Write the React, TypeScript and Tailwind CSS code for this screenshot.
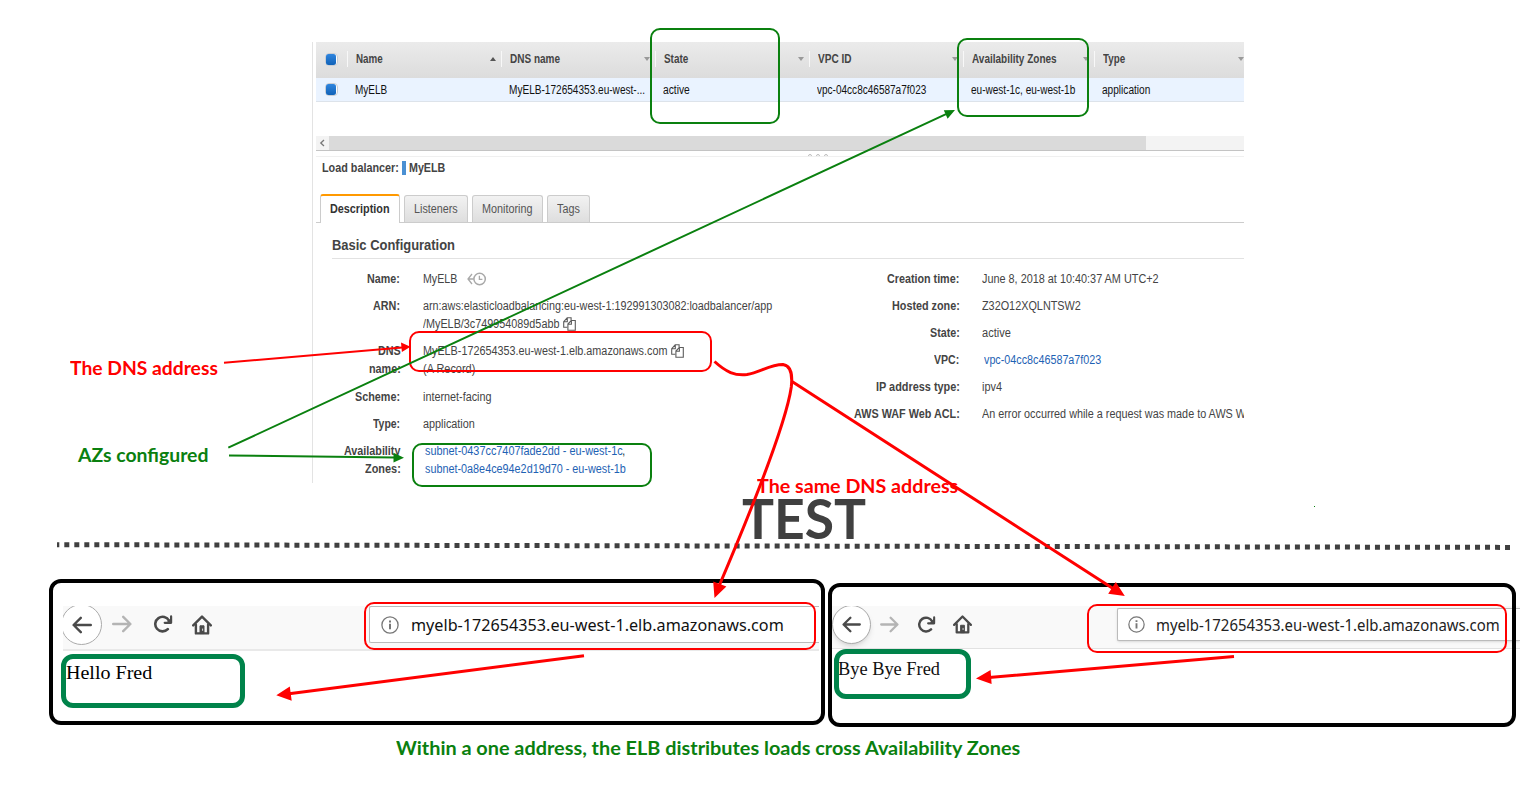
import { useLayoutEffect, useRef } from "react";
import type { ReactNode } from "react";

/* Single line of text condensed or widened to a given advance width. */
function Fit({ w, children, className = "" }: { w: number; children: ReactNode; className?: string }) {
  const ref = useRef<HTMLSpanElement>(null);
  useLayoutEffect(() => {
    const el = ref.current;
    if (el) el.style.transform = `scaleX(${w / el.offsetWidth})`;
  }, [w]);
  return (
    <span className={`inline-flex whitespace-nowrap ${className}`} style={{ width: w }}>
      <span ref={ref} className="inline-block shrink-0 origin-left">
        {children}
      </span>
    </span>
  );
}

function Checkbox() {
  return (
    <span className="h-[13px] w-[13px] rounded-[4px] border border-[#c9cdd3] bg-white px-[0.5px]">
      <span className="block size-full rounded-[2.5px] bg-linear-to-b from-[#2f85de] to-[#0f62b8]" />
    </span>
  );
}

function CopyIcon() {
  return (
    <svg viewBox="0 0 13 14" className="-mt-px h-[14px] w-[13px] shrink-0" fill="none" stroke="#5c5c5c" strokeWidth="1.1">
      <path d="M4.4 10.2H.7V4.6L4.2.8h3.9v2.6M.8 4.7h3.5V1" />
      <path d="M4.9 7 8.3 3.5h4v9.7H4.9zM5 7.2h3.4V3.7" fill="#fff" />
    </svg>
  );
}

function HistoryIcon() {
  return (
    <svg viewBox="0 0 20 14" className="h-[14px] w-5" fill="none" stroke="#a9a9a9" strokeWidth="1.5">
      <circle cx="12.6" cy="7" r="5.7" />
      <path d="M12.4 3.8v3.6h3M6.8 7H1.2M5 2 1 7l4 5" strokeWidth="1.3" />
    </svg>
  );
}

const columns = [
  { title: "Name", tw: 27, value: "MyELB", vw: 32.5, up: true },
  { title: "DNS name", tw: 50, value: "MyELB-172654353.eu-west-...", vw: 136 },
  { title: "State", tw: 24, value: "active", vw: 26.5 },
  { title: "VPC ID", tw: 33.5, value: "vpc-04cc8c46587a7f023", vw: 109.5 },
  { title: "Availability Zones", tw: 85, value: "eu-west-1c, eu-west-1b", vw: 104.5 },
  { title: "Type", tw: 22, value: "application", vw: 48 },
];

const tableGrid = "grid grid-cols-[31px_154px_154px_154px_154px_131px_150px]";

function Table() {
  return (
    <>
      <div className={`${tableGrid} h-9 items-center bg-linear-to-b from-[#ebebeb] to-[#dcdcdc] pb-[2px] font-bold text-[#444]`}>
        <div className="flex pl-[8.5px]">
          <Checkbox />
        </div>
        {columns.map((c, i) => (
          <div
            key={c.title}
            className={`flex h-4 items-center justify-between border-l border-[#f8f8f8] pl-[7.5px] ${i === 5 ? "pr-0" : "pr-[5px]"}`}
          >
            <Fit w={c.tw}>{c.title}</Fit>
            {c.up ? (
              <span className="border-x-[3px] border-b-[4px] border-x-transparent border-b-[#555]" />
            ) : (
              <span className="border-x-[3px] border-t-[4px] border-x-transparent border-t-[#999]" />
            )}
          </div>
        ))}
      </div>
      <div className={`${tableGrid} h-6 items-center border-b border-[#dde3ea] bg-[#eaf3ff] text-[#111]`}>
        <div className="flex pl-[8.5px]">
          <Checkbox />
        </div>
        {columns.map((c) => (
          <div key={c.title} className="flex pl-[7.5px]">
            <Fit w={c.vw}>{c.value}</Fit>
          </div>
        ))}
      </div>
    </>
  );
}

function Tabs() {
  return (
    <div className="flex h-[29px] items-end gap-[4px] border-b border-[#ccc] pl-1 text-[#555]">
      <div className="-mb-px flex h-[29px] w-20 items-center justify-center rounded-t-[3px] border-x border-t-2 border-x-[#ccc] border-t-[#ff9900] bg-white pb-[2px] font-bold text-[#333]">
        <Fit w={59.5}>Description</Fit>
      </div>
      <div className="flex h-[27px] w-16 items-center justify-center rounded-t-[3px] border border-b-0 border-[#ccc] bg-linear-to-b from-[#f2f2f2] to-[#dedede]">
        <Fit w={44}>Listeners</Fit>
      </div>
      <div className="flex h-[27px] w-[71px] items-center justify-center rounded-t-[3px] border border-b-0 border-[#ccc] bg-linear-to-b from-[#f2f2f2] to-[#dedede]">
        <Fit w={50.5}>Monitoring</Fit>
      </div>
      <div className="flex h-[27px] w-[43px] items-center justify-center rounded-t-[3px] border border-b-0 border-[#ccc] bg-linear-to-b from-[#f2f2f2] to-[#dedede]">
        <Fit w={22.5}>Tags</Fit>
      </div>
    </div>
  );
}

type Line = [string, number];

function Row({ label, children }: { label: Line[]; children: ReactNode }) {
  return (
    <div className="flex gap-[23px]">
      <div className="flex w-[120px] shrink-0 flex-col items-end font-bold text-[#444]">
        {label.map(([t, w]) => (
          <Fit key={t} w={w}>
            {t}
          </Fit>
        ))}
      </div>
      <div className="flex flex-col">{children}</div>
    </div>
  );
}

function Details() {
  return (
    <div className="flex pt-[11px] leading-[18px] text-[#444]">
      <div className="-ml-[52px] flex w-[560px] shrink-0 flex-col gap-[9.2px]">
        <Row label={[["Name:", 33]]}>
          <div className="flex items-center gap-[9px]">
            <Fit w={34.5}>MyELB</Fit>
            <HistoryIcon />
          </div>
        </Row>
        <Row label={[["ARN:", 27]]}>
          <Fit w={349}>arn:aws:elasticloadbalancing:eu-west-1:192991303082:loadbalancer/app</Fit>
          <div className="flex items-center gap-[4px]">
            <Fit w={136}>/MyELB/3c749954089d5abb</Fit>
            <CopyIcon />
          </div>
        </Row>
        <Row label={[["DNS", 22.5], ["name:", 31.5]]}>
          <div className="flex items-center gap-[4px]">
            <Fit w={244}>MyELB-172654353.eu-west-1.elb.amazonaws.com</Fit>
            <CopyIcon />
          </div>
          <Fit w={52}>(A Record)</Fit>
        </Row>
        <Row label={[["Scheme:", 45]]}>
          <Fit w={68.5}>internet-facing</Fit>
        </Row>
        <Row label={[["Type:", 27]]}>
          <Fit w={51.5}>application</Fit>
        </Row>
        <Row label={[["Availability", 56.5], ["Zones:", 35.5]]}>
          <div className="flex pl-[1.5px]">
            <Fit w={197.5} className="text-[#1e62b4]">subnet-0437cc7407fade2dd - eu-west-1c</Fit>,
          </div>
          <Fit w={201} className="ml-[1.5px] text-[#1e62b4]">subnet-0a8e4ce94e2d19d70 - eu-west-1b</Fit>
        </Row>
      </div>
      <div className="-ml-px flex flex-col gap-[9px]">
        <Row label={[["Creation time:", 72.5]]}>
          <Fit w={176.5}>June 8, 2018 at 10:40:37 AM UTC+2</Fit>
        </Row>
        <Row label={[["Hosted zone:", 67.5]]}>
          <Fit w={98.5}>Z32O12XQLNTSW2</Fit>
        </Row>
        <Row label={[["State:", 29.5]]}>
          <Fit w={28.5}>active</Fit>
        </Row>
        <Row label={[["VPC:", 25.5]]}>
          <Fit w={117.5} className="ml-[1.5px] text-[#1e62b4]">vpc-04cc8c46587a7f023</Fit>
        </Row>
        <Row label={[["IP address type:", 83.5]]}>
          <Fit w={20}>ipv4</Fit>
        </Row>
        <Row label={[["AWS WAF Web ACL:", 105.5]]}>
          <Fit w={264}>An error occurred while a request was made to AWS W</Fit>
        </Row>
      </div>
    </div>
  );
}

function Console() {
  return (
    <section className="ml-[312px] mt-[42px] h-[441px] w-[932px] overflow-hidden border-l border-[#e3e3e3] pl-[3px] font-['Liberation_Sans',Arial,sans-serif] text-[12px] leading-4">
      <Table />
      <div className="mt-[34px] flex h-[15px] items-stretch border-b border-[#c4c4c4] bg-[#f3f3f3]">
        <svg viewBox="0 0 13 14" className="w-[13px]" fill="none" stroke="#777" strokeWidth="1.3">
          <path d="M8 4 4.8 7 8 10" />
        </svg>
        <div className="w-[817px] bg-[#dadada]" />
      </div>
      <div className="mt-[3px] flex h-[3px] gap-[4px] overflow-hidden border-b border-[#f0f0f0] pl-[492px]">
        <span className="size-1 shrink-0 rounded-full border border-[#bbb]" />
        <span className="size-1 shrink-0 rounded-full border border-[#bbb]" />
        <span className="size-1 shrink-0 rounded-full border border-[#bbb]" />
      </div>
      <div className="flex h-[37px] items-start pl-[5.5px] pt-[3px] font-bold text-[#444]">
        <Fit w={76.5}>Load balancer:</Fit>
        <span className="ml-[3.5px] mt-[1px] h-[14px] w-[4px] bg-[#4a90d3]" />
        <Fit w={36.5} className="ml-[3.5px]">MyELB</Fit>
      </div>
      <Tabs />
      <div className="ml-4">
        <h2 className="flex h-9 items-center border-b border-[#e2e2e2] pt-[9px] text-[14px] font-bold text-[#444]">
          <Fit w={123}>Basic Configuration</Fit>
        </h2>
        <Details />
      </div>
    </section>
  );
}

function BackIcon({ className }: { className: string }) {
  return (
    <svg viewBox="0 0 20 18" className={className} fill="none" stroke="#4a4a4a" strokeWidth="2.4" strokeLinecap="round" strokeLinejoin="round">
      <path d="M18.8 9H1.8M8.8 1.8 1.6 9l7.2 7.2" />
    </svg>
  );
}

function ForwardIcon({ className }: { className: string }) {
  return (
    <svg viewBox="0 0 20 18" className={className} fill="none" stroke="#b4b4b4" strokeWidth="2.4" strokeLinecap="round" strokeLinejoin="round">
      <path d="M1.2 9h17M11.2 1.8 18.4 9l-7.2 7.2" />
    </svg>
  );
}

function ReloadIcon({ className }: { className: string }) {
  return (
    <svg viewBox="0 0 20 18" className={className} fill="none" stroke="#4a4a4a" strokeWidth="2.6" strokeLinecap="round">
      <path d="M14.8 14.2A7.3 7.3 0 1 1 16 5.6" />
      <path d="M18.1 1.4v6.4h-6.4" strokeWidth="2.2" strokeLinejoin="round" />
      <path d="M18 3v5h-5z" fill="#4a4a4a" stroke="none" />
    </svg>
  );
}

function HomeIcon({ className }: { className: string }) {
  return (
    <svg viewBox="0 0 20 20" className={className} fill="none" stroke="#4a4a4a" strokeWidth="2.4" strokeLinecap="round" strokeLinejoin="round">
      <path d="M1.2 10.4 10 1.6l8.8 8.8" />
      <path d="M3.9 9.5v8.9h12.2V9.5" />
      <path d="M8 18.2v-7.4h4v7.4z" fill="#4a4a4a" strokeWidth="1" />
      <path d="M10.6 14v1.4" stroke="#ddd" strokeWidth="1" />
    </svg>
  );
}

function InfoIcon({ className }: { className: string }) {
  return (
    <svg viewBox="0 0 18 18" className={className} fill="none" stroke="#777">
      <circle cx="9" cy="9" r="8.1" strokeWidth="1.3" />
      <path d="M9 7.8v5.4M9 4.4v2" strokeWidth="2" />
    </svg>
  );
}

function HelloBrowser() {
  return (
    <section className="relative h-[146px] w-[776px] pl-[14px] pt-[27px]">
      <div className="flex h-[45px] w-[756px] overflow-hidden border-b-2 border-[#e9e9e9] bg-[#f9f9f9]">
        <div className="-ml-[2px] -mt-[2px] flex size-[41px] shrink-0 items-center justify-center rounded-full border border-[#aaa] bg-white">
          <BackIcon className="h-[18px] w-5" />
        </div>
        <ForwardIcon className="ml-[10px] mt-[9px] h-[18px] w-5" />
        <ReloadIcon className="ml-[21px] mt-[9px] h-[18px] w-5" />
        <HomeIcon className="ml-[19px] mt-[9px] h-5 w-5" />
        <div className="ml-[157px] flex h-[37px] flex-1 items-center rounded-l-[2px] border border-r-0 border-[#bbb] bg-white pl-[11px] text-[17px] text-[#111]">
          <InfoIcon className="size-[18px]" />
          <Fit w={373} className="ml-[12px] pt-px font-['Noto_Sans',sans-serif] leading-6">myelb-172654353.eu-west-1.elb.amazonaws.com</Fit>
        </div>
      </div>
      <p className="pl-[3px] pt-[10px] font-['Liberation_Serif',serif] text-[19px] leading-6 text-black">
        <Fit w={86.5}>Hello Fred</Fit>
      </p>
      <div className="absolute inset-0 rounded-[12px] border-4 border-black" />
      <div className="absolute left-[12px] top-[75px] h-[54px] w-[184px] rounded-[12px] border-5 border-[#00834a]" />
      <div className="absolute left-[315px] top-[23px] h-[48px] w-[452px] rounded-[10px] border-2 border-[#f00]" />
    </section>
  );
}

function ByeBrowser() {
  return (
    <section className="relative mt-1 h-[144px] w-[692px] pl-[4px] pt-[23px]">
      <div className="flex h-[43px] overflow-hidden border-b border-[#e2e2e2] bg-[#f9f9f9]">
        <div className="-mt-[1px] flex size-[39px] shrink-0 items-center justify-center rounded-full border border-[#aaa] bg-white shadow-md">
          <BackIcon className="h-[17px] w-[19px]" />
        </div>
        <ForwardIcon className="ml-[9px] mt-[10px] h-[17px] w-[19px]" />
        <ReloadIcon className="ml-[18px] mt-[10px] h-[17px] w-[19px]" />
        <HomeIcon className="ml-[17px] mt-[9px] h-[19px] w-[19px]" />
        <div className="ml-[145px] mt-[2px] flex h-[33px] flex-1 items-center rounded-l-[2px] border border-r-0 border-[#bbb] bg-white pl-[10px] text-[16px] text-[#222] shadow-sm">
          <InfoIcon className="size-[17px]" />
          <Fit w={344} className="ml-[11px] pt-px font-['Noto_Sans',sans-serif] leading-6">myelb-172654353.eu-west-1.elb.amazonaws.com</Fit>
        </div>
      </div>
      <p className="pl-[6px] pt-[8px] font-['Liberation_Serif',serif] text-[18px] leading-6 text-[#111]">
        <Fit w={102}>Bye Bye Fred</Fit>
      </p>
      <div className="absolute inset-y-0 left-0 w-[688px] rounded-[12px] border-4 border-black" />
      <div className="absolute left-[6px] top-[66px] h-[50px] w-[137px] rounded-[12px] border-5 border-[#00834a]" />
      <div className="absolute left-[259px] top-[21px] h-[49px] w-[420px] rounded-[10px] border-2 border-[#f00]" />
    </section>
  );
}

function Annotations() {
  return (
    <div className="pointer-events-none absolute inset-0 font-['Lato',sans-serif] text-[18.5px] leading-5 font-bold">
      <div className="absolute left-[650px] top-[28px] h-24 w-[130px] rounded-[10px] border-2 border-[#0a800f]" />
      <div className="absolute left-[957px] top-[38px] h-[79px] w-[132px] rounded-[10px] border-2 border-[#0a800f]" />
      <div className="absolute left-[412px] top-[443px] h-[44px] w-[240px] rounded-[10px] border-2 border-[#0a800f]" />
      <div className="absolute left-[409px] top-[331px] h-[41px] w-[303px] rounded-[10px] border-2 border-[#f00]" />
      <Fit w={148} className="absolute left-[70px] top-[358px] text-[#f00]">The DNS address</Fit>
      <Fit w={131} className="absolute left-[78px] top-[445px] text-[#0a800f]">AZs configured</Fit>
      <Fit w={201} className="absolute left-[757px] top-[476px] text-[#f00]">The same DNS address</Fit>
      <Fit w={624.5} className="absolute left-[396px] top-[738px] text-[#0a800f]">
        Within a one address, the ELB distributes loads cross Availability Zones
      </Fit>
      <svg viewBox="0 0 1520 800" className="absolute inset-0 h-[800px] w-[1520px]" fill="none">
        <path d="M57 544.7 1510 547.4" stroke="#404040" strokeWidth="5" strokeDasharray="5 5.005" strokeDashoffset="2.7" />
        <g stroke="#0a800f" strokeWidth="2">
          <path d="M228.3 447.7 946 114.2M229 455.5 395 457.6" />
        </g>
        <g fill="#0a800f">
          <path d="M955 110 943.8 110.3 947.6 118.8zM404 457.7 393.5 452.8v9.6z" />
          <path d="M1314 506h1v1h-1z" />
        </g>
        <path d="M224 362.7 402 347.5" stroke="#f00" strokeWidth="2" />
        <g stroke="#f00" strokeWidth="3">
          <path d="M714.5 361.5C726 372 735 376 747 374.6 760 372.5 770 364.5 783 364.6 792 366 792.5 376 791.3 387 786 424 745 525 719.5 585" />
          <path d="M792 381.5 1113 588.5M584 655.7 289 693.8M1234 656.6 989 677.5" />
        </g>
        <path
          d="M410.5 346.7 401 342.4l.9 9.5zM714.5 598 713.2 581.5l13.2 5zM1124.8 596 1115.8 582l-7.6 11.8zM276.3 695.3 289.8 686.6l1.9 14.2zM976 678.6 990.6 670l1 14z"
          fill="#f00"
        />
      </svg>
    </div>
  );
}

export default function App() {
  return (
    <main className="relative flex h-[800px] w-[1520px] flex-col overflow-hidden bg-white">
      <Console />
      <h1 className="h-24 pl-[742px] pt-[7px] font-['Lato',sans-serif] text-[56px] leading-[56px] font-bold text-[#404040]">
        <Fit w={124}>TEST</Fit>
      </h1>
      <div className="flex items-start gap-[3px] pl-[49px]">
        <HelloBrowser />
        <ByeBrowser />
      </div>
      <Annotations />
    </main>
  );
}
